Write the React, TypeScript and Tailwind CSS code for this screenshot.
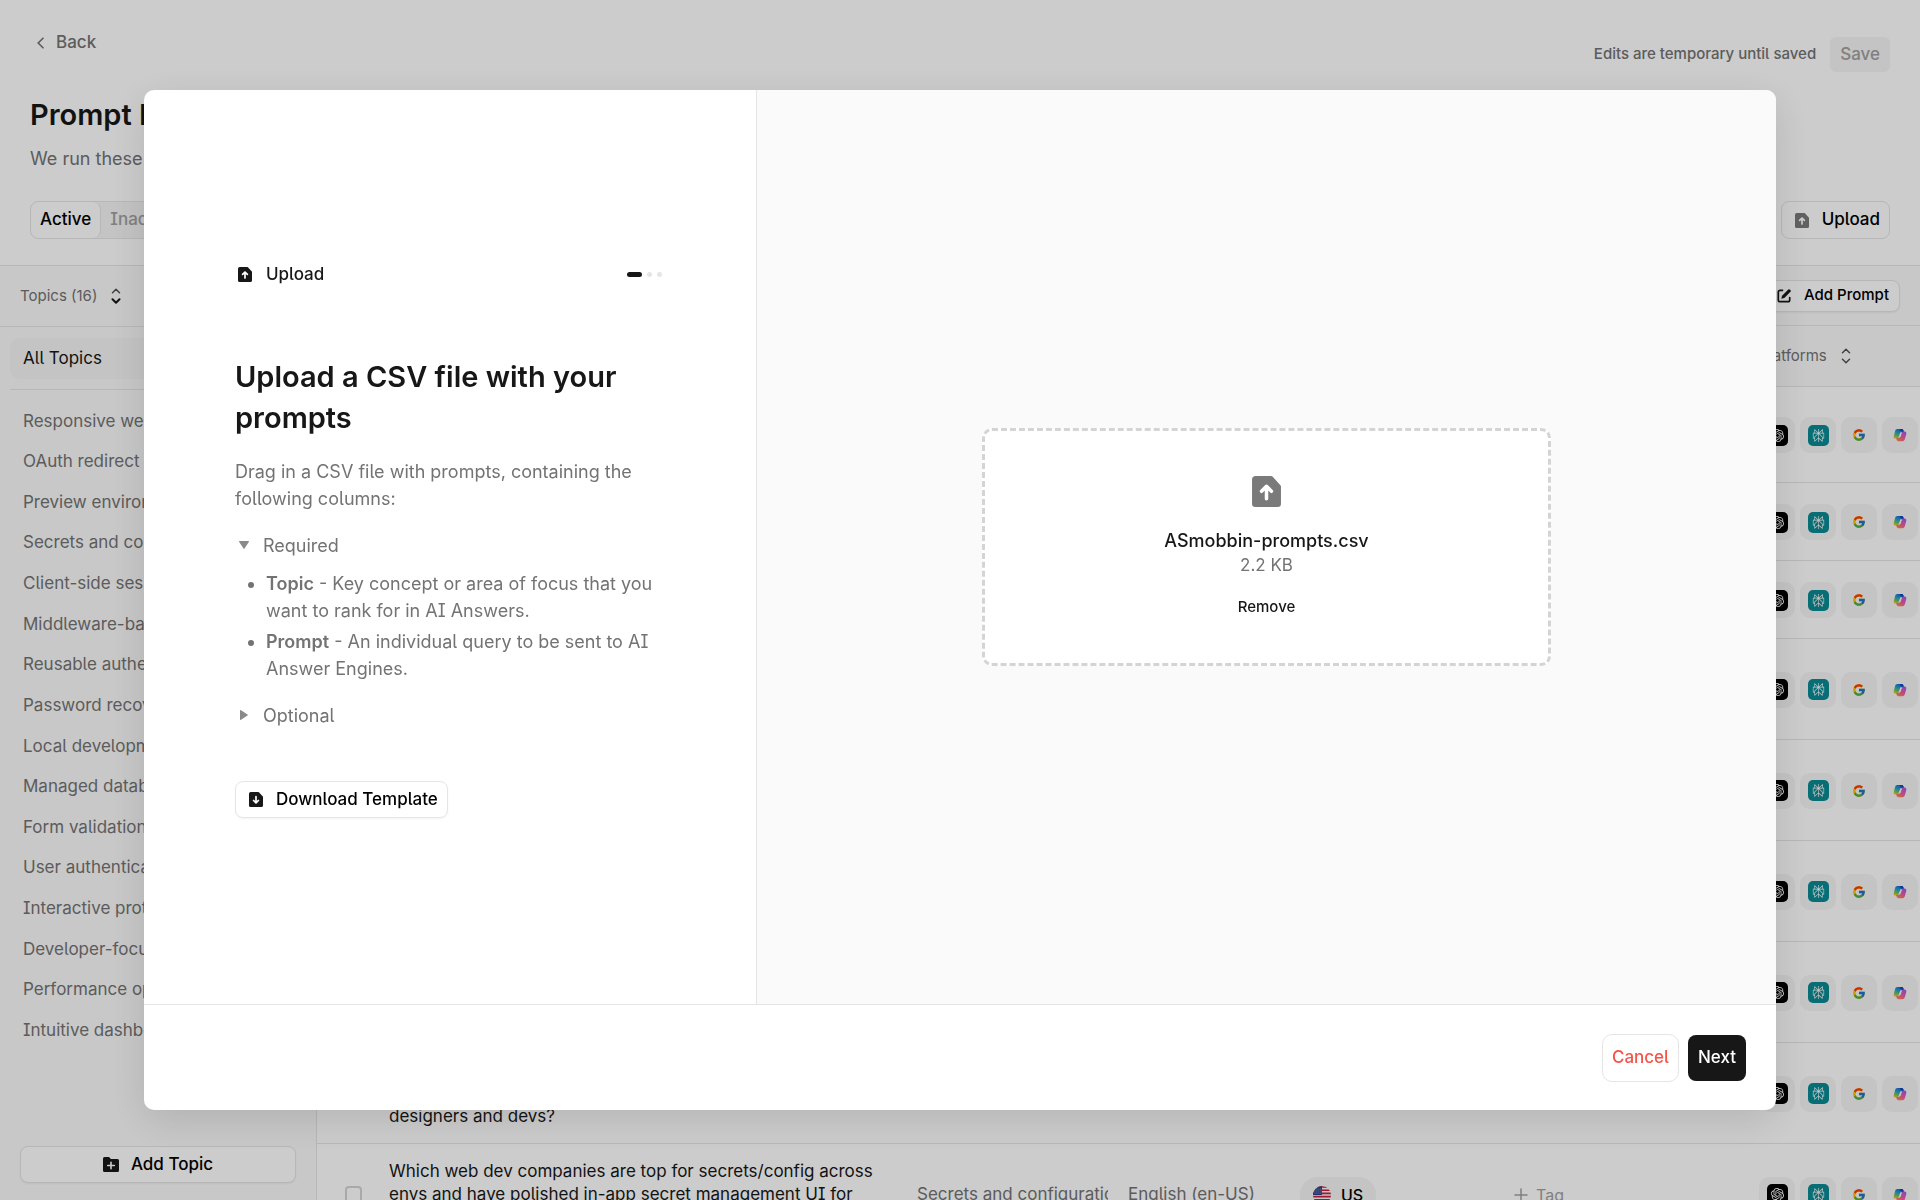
import type { ReactNode } from 'react';
import { FcGoogle } from 'react-icons/fc';
import { SiOpenai, SiPerplexity } from 'react-icons/si';

const topics = [
  'Responsive web design',
  'OAuth redirect URIs',
  'Preview environments',
  'Secrets and configuration',
  'Client-side sessions',
  'Middleware-based auth',
  'Reusable authentication',
  'Password recovery',
  'Local development',
  'Managed databases',
  'Form validation',
  'User authentication',
  'Interactive prototypes',
  'Developer-focused docs',
  'Performance optimization',
  'Intuitive dashboards',
];

interface PromptRow {
  id: number;
  height: string;
  prompt?: string;
  topic?: string;
}

const rows: PromptRow[] = [
  { id: 1, height: 'h-[96px]' },
  { id: 2, height: 'h-[78px]' },
  { id: 3, height: 'h-[78px]' },
  { id: 4, height: 'h-[101px]' },
  { id: 5, height: 'h-[101px]' },
  { id: 6, height: 'h-[101px]' },
  { id: 7, height: 'h-[101px]' },
  {
    id: 8,
    height: 'h-[101px]',
    prompt: 'Which web dev platforms are best for building\ninteractive prototypes shared between\ndesigners and devs?',
  },
  {
    id: 9,
    height: 'h-[101px]',
    prompt: 'Which web dev companies are top for secrets/config across\nenvs and have polished in-app secret management UI for\nteams?',
    topic: 'Secrets and configuration',
  },
];

function FileIcon({ className, down = false }: { className: string; down?: boolean }) {
  return (
    <svg viewBox="0 0 14 15" className={className} aria-hidden="true">
      <path
        fill="currentColor"
        d="M1.800 0h7.400a1 1 0 0 1 .7.300l3.700 4a1 1 0 0 1 .4.800v8.300a1.600 1.600 0 0 1-1.600 1.600H1.600A1.600 1.600 0 0 1 0 13.400V1.800A1.800 1.800 0 0 1 1.800 0z"
      />
      <path
        d={down ? 'M7 4.700v6M4.600 8.500 7 10.900l2.400-2.400' : 'M7 11v-6M4.600 7.400 7 5l2.400 2.400'}
        fill="none"
        stroke="white"
        strokeWidth="1.700"
        strokeLinecap="round"
        strokeLinejoin="round"
      />
    </svg>
  );
}

function FolderPlusIcon() {
  return (
    <svg viewBox="0 0 16 15" className="h-[15px] w-4 text-neutral-900" aria-hidden="true">
      <path
        fill="currentColor"
        d="M1.500 0h4.300a1 1 0 0 1 .8.400L7.800 2h6.700A1.500 1.500 0 0 1 16 3.500v10a1.500 1.500 0 0 1-1.500 1.500h-13A1.500 1.500 0 0 1 0 13.500v-12A1.500 1.500 0 0 1 1.500 0z"
      />
      <path d="M8 5.200v6.600M4.700 8.500h6.600" stroke="white" strokeWidth="1.600" strokeLinecap="round" />
    </svg>
  );
}

function ComposeIcon() {
  return (
    <svg viewBox="0 0 14 14" className="size-[14px] text-neutral-900" aria-hidden="true">
      <path
        d="M5.500 1.300H3A1.700 1.700 0 0 0 1.300 3v8A1.700 1.700 0 0 0 3 12.700h8a1.700 1.700 0 0 0 1.700-1.700V8.500"
        fill="none"
        stroke="currentColor"
        strokeWidth="1.700"
        strokeLinecap="round"
      />
      <path d="M11.300.500a1 1 0 0 1 1.400 0l.800.800a1 1 0 0 1 0 1.400L7.300 8.900l-3 .800.800-3z" fill="currentColor" />
    </svg>
  );
}

function SortIcon({ dark = false }: { dark?: boolean }) {
  return (
    <svg
      viewBox="0 0 10 16"
      className="h-4 w-[10px] text-neutral-600"
      fill="none"
      strokeWidth="1.500"
      strokeLinecap="round"
      strokeLinejoin="round"
      aria-hidden="true"
    >
      <path d="M1.500 4.700 5 1.300l3.500 3.400" stroke="currentColor" />
      <path d="M1.500 11.300 5 14.700l3.500-3.400" stroke={dark ? '#171717' : 'currentColor'} strokeWidth={dark ? 2 : 1.5} />
    </svg>
  );
}

function CopilotIcon() {
  return (
    <svg viewBox="0 0 24 24" className="size-[14px]" aria-hidden="true">
      <defs>
        <linearGradient id="copilot-left" gradientUnits="userSpaceOnUse" x1="12" y1="1" x2="5" y2="18">
          <stop offset="0" stopColor="#1a5fd8" />
          <stop offset=".45" stopColor="#1ea7c9" />
          <stop offset=".75" stopColor="#7cc04f" />
          <stop offset="1" stopColor="#f2c32e" />
        </linearGradient>
        <linearGradient id="copilot-right" gradientUnits="userSpaceOnUse" x1="19" y1="6" x2="10" y2="23">
          <stop offset="0" stopColor="#a45cf0" />
          <stop offset=".5" stopColor="#ec5aa6" />
          <stop offset="1" stopColor="#ff8550" />
        </linearGradient>
      </defs>
      <path d="M7.800 1.500h7c1.800 0 2.600 1 3.100 2.600l.8 2.700h-3.800c-1.500 0-2.500.9-2.900 2.200l-2.300 6.500c-.5 1.700-1.500 2.500-3.300 2.500H4C1.700 18 .7 16 1.300 13.500l2.200-8c.7-2.500 1.800-4 4.300-4z" fill="url(#copilot-left)" />
      <path d="M16.200 22.500h-7c-1.800 0-2.600-1-3.100-2.600l-.8-2.700h3.800c1.500 0 2.500-.9 2.900-2.200l2.300-6.500c.5-1.700 1.500-2.500 3.300-2.500H20c2.300 0 3.300 2 2.700 4.500l-2.200 8c-.7 2.500-1.800 4-4.300 4z" fill="url(#copilot-right)" />
      <path d="M11.500 1.500h3.300c1.800 0 2.600 1 3.100 2.600l.6 2h-3.300c-1.300 0-2-.6-2.400-1.800z" fill="#1546b8" />
      <path d="M12.900 8.500h2.300l-2.300 7h-2.300z" fill="#f5f5f5" />
    </svg>
  );
}

function UsFlag() {
  return (
    <svg viewBox="0 0 18 18" className="size-[18px]" aria-hidden="true">
      <defs>
        <clipPath id="us-flag">
          <circle cx="9" cy="9" r="9" />
        </clipPath>
      </defs>
      <g clipPath="url(#us-flag)">
        <rect width="18" height="18" fill="#f5f5f5" />
        <path d="M0 1h18M0 4.200h18M0 7.400h18M0 10.600h18M0 13.800h18M0 17h18" stroke="#c8203f" strokeWidth="1.600" />
        <rect width="9" height="9" fill="#2b3f87" />
        <path d="M1.500 3h7M1.500 5h7M1.500 7h7" stroke="#f5f5f5" strokeWidth=".7" strokeDasharray=".8 1.200" />
      </g>
    </svg>
  );
}

function Tile({ children }: { children: ReactNode }) {
  return (
    <span className="flex size-9 shrink-0 items-center justify-center rounded-[10px] bg-neutral-100">
      {children}
    </span>
  );
}

function Platforms() {
  return (
    <div className="flex gap-[5px]">
      <Tile>
        <span className="flex size-[21px] items-center justify-center rounded-[5px] bg-black text-white">
          <SiOpenai size={13} />
        </span>
      </Tile>
      <Tile>
        <span className="flex size-[21px] items-center justify-center rounded-[5px] bg-[#098a93] text-white">
          <SiPerplexity size={13} />
        </span>
      </Tile>
      <Tile>
        <FcGoogle size={14} />
      </Tile>
      <Tile>
        <CopilotIcon />
      </Tile>
    </div>
  );
}

function Sidebar() {
  return (
    <aside className="flex w-[317px] shrink-0 flex-col border-r border-neutral-200 bg-neutral-50">
      <div className="flex h-[61px] shrink-0 items-center gap-[14px] border-b border-neutral-200 pl-5 text-[15px] text-neutral-500">
        Topics (16)
        <SortIcon dark />
      </div>
      <nav className="flex flex-col pt-[11px] text-[17px] text-neutral-500">
        <a href="#all" className="mx-[10px] flex h-[41px] items-center rounded-[10px] bg-neutral-100 pl-[13px] text-neutral-900">
          All Topics
        </a>
        <hr className="mx-[10px] mt-[10px] border-neutral-200" />
        <ul className="mt-[11px] grid h-[650px] auto-rows-fr">
          {topics.map((topic) => (
            <li key={topic} className="flex items-center">
              <a href="#topic" className="truncate pl-[23px]">
                {topic}
              </a>
            </li>
          ))}
        </ul>
      </nav>
      <div className="mt-auto px-5 pb-[17px]">
        <button
          type="button"
          className="flex h-[37px] w-full items-center justify-center gap-3 rounded-lg border border-neutral-200 bg-white text-[17px] font-medium shadow-xs"
        >
          <FolderPlusIcon />
          Add Topic
        </button>
      </div>
    </aside>
  );
}

function PromptTable() {
  return (
    <table className="w-full table-fixed border-collapse bg-white text-[17px] leading-[23px]">
      <thead>
        <tr className="h-[60px] border-b border-neutral-200 bg-neutral-50 text-left text-[15px] text-neutral-500">
          <th className="w-[72px]" />
          <th className="w-[528px]" />
          <th className="w-[211px]" />
          <th className="w-[172px]" />
          <th className="w-[214px]" />
          <th />
          <th className="w-[161px] font-normal">
            <span className="flex items-center gap-[14px]">
              Platforms
              <SortIcon />
            </span>
          </th>
        </tr>
      </thead>
      <tbody>
        {rows.map((row) => (
          <tr key={row.id} className={`border-b border-neutral-200 *:pt-0.5 ${row.height}`}>
            <td className="pl-7">
              <input
                type="checkbox"
                aria-label="Select prompt"
                className="block size-[17px] appearance-none rounded-sm border-2 border-neutral-300 bg-white"
              />
            </td>
            <td className="whitespace-pre text-neutral-900">{row.prompt}</td>
            <td className="text-neutral-500">
              {row.topic && <div className="mr-5 overflow-hidden whitespace-nowrap">{row.topic}</div>}
            </td>
            <td className="whitespace-nowrap text-neutral-500">{row.topic && 'English (en-US)'}</td>
            <td>
              {row.topic && (
                <span className="inline-flex h-9 items-center gap-[10px] rounded-full bg-neutral-100 px-[13px] align-middle text-base font-medium">
                  <UsFlag />
                  US
                </span>
              )}
            </td>
            <td>
              {row.topic && (
                <button type="button" className="flex items-center gap-2 text-base text-neutral-400">
                  <svg viewBox="0 0 14 14" className="size-[14px]" aria-hidden="true">
                    <path d="M7 1v12M1 7h12" stroke="currentColor" strokeWidth="1.500" strokeLinecap="round" />
                  </svg>
                  Tag
                </button>
              )}
            </td>
            <td>
              <Platforms />
            </td>
          </tr>
        ))}
      </tbody>
    </table>
  );
}

function UploadDialog() {
  return (
    <div
      role="dialog"
      aria-modal="true"
      aria-labelledby="upload-title"
      className="flex h-[85vh] w-[85vw] flex-col overflow-hidden rounded-[10px] bg-white shadow-[0_10px_40px_rgba(0,0,0,0.12)]"
    >
      <div className="flex min-h-0 flex-1">
        <section className="flex w-3/8 items-center justify-center">
          <div className="w-[430px] pb-4 text-lg leading-[27px] text-neutral-500">
            <div className="flex items-center justify-between pr-[3px]">
              <span className="flex items-center gap-[14px] pl-[3px] text-[17px] font-medium text-neutral-900">
                <FileIcon className="h-[15px] w-[14px]" />
                Upload
              </span>
              <span className="flex gap-[5px]">
                <span className="h-[5px] w-[15px] rounded-full bg-neutral-900" />
                <span className="size-[5px] rounded-full bg-neutral-200" />
                <span className="size-[5px] rounded-full bg-neutral-200" />
              </span>
            </div>
            <h2
              id="upload-title"
              className="mt-[68px] text-[29px] leading-[41px] font-semibold text-neutral-900 [font-feature-settings:normal]"
            >
              Upload a CSV file with your prompts
            </h2>
            <p className="mt-5">Drag in a CSV file with prompts, containing the following columns:</p>
            <details open className="mt-5">
              <summary className="flex items-center gap-[14px] pl-1">
                <svg viewBox="0 0 10 8" className="h-2 w-[10px]" aria-hidden="true">
                  <path d="M.7 0h8.600a.6.600 0 0 1 .5 1L5.500 7.500a.6.600 0 0 1-1 0L.2 1a.6.600 0 0 1 .5-1z" fill="#8a8a8a" />
                </svg>
                Required
              </summary>
              <ul className="mt-[11px] list-disc space-y-1 pl-[31px]">
                <li>
                  <strong className="font-semibold">Topic</strong> - Key concept or area of focus that you want to rank for in AI Answers.
                </li>
                <li>
                  <strong className="font-semibold">Prompt</strong> - An individual query to be sent to AI Answer Engines.
                </li>
              </ul>
            </details>
            <details className="mt-5">
              <summary className="flex items-center gap-[15px] pl-[5px]">
                <svg viewBox="0 0 8 10" className="h-[10px] w-2" aria-hidden="true">
                  <path d="M0 .7v8.600a.6.600 0 0 0 1 .5L7.500 5.500a.6.600 0 0 0 0-1L1 .2a.6.600 0 0 0-1 .5z" fill="#8a8a8a" />
                </svg>
                Optional
              </summary>
            </details>
            <button
              type="button"
              className="mt-[52px] flex h-[37px] items-center gap-[13px] rounded-lg border border-neutral-200 pr-[9px] pl-[13px] text-[17px] font-medium whitespace-nowrap text-black shadow-xs"
            >
              <FileIcon down className="h-[15px] w-[14px] text-neutral-900" />
              Download Template
            </button>
          </div>
        </section>
        <section className="flex flex-1 items-center justify-center border-l border-neutral-200 bg-neutral-50">
          <div className="flex h-[238px] w-[569px] flex-col items-center justify-center rounded-[10px] border-3 border-dashed border-neutral-300 bg-white pt-[3px]">
            <FileIcon className="h-[31px] w-[29px] text-[#7a7a7a]" />
            <p className="mt-[21px] text-lg leading-[25px] font-medium text-neutral-900">ASmobbin-prompts.csv</p>
            <p className="text-[17px] leading-[25px] text-neutral-500">2.2 KB</p>
            <button type="button" className="mt-4 h-7 text-[15px] font-medium text-neutral-900">
              Remove
            </button>
          </div>
        </section>
      </div>
      <footer className="flex h-[106px] shrink-0 items-center justify-end gap-[9px] border-t border-neutral-200 pr-[30px] text-[17px] font-medium">
        <button type="button" className="h-12 rounded-[10px] border border-neutral-200 px-[9px] text-[#f5544a]">
          Cancel
        </button>
        <button type="button" className="h-[46px] rounded-lg bg-neutral-900 px-[10px] text-white">
          Next
        </button>
      </footer>
    </div>
  );
}

export default function App() {
  return (
    <div className="flex h-screen flex-col overflow-hidden bg-white font-[Inter,sans-serif] [font-feature-settings:'cv05','cv08']">
      <header className="h-[266px] shrink-0 border-b border-neutral-200 px-[30px] pt-[29px]">
        <div className="flex justify-between">
          <a href="#back" className="flex h-7 items-center gap-3 pl-[7px] text-[17px] font-medium text-neutral-500">
            <svg viewBox="0 0 7 12" className="h-3 w-[7px]" aria-hidden="true">
              <path d="M6 1.200 1.200 6 6 10.800" fill="none" stroke="currentColor" strokeWidth="1.600" strokeLinecap="round" />
            </svg>
            Back
          </a>
          <div className="mt-2 flex h-[35px] items-center gap-[14px] text-[15px] font-medium text-neutral-500">
            Edits are temporary until saved
            <button type="button" disabled className="h-full rounded-md bg-neutral-100 px-[10px] text-[17px] text-neutral-400">
              Save
            </button>
          </div>
        </div>
        <h1 className="mt-[22px] text-[29px] leading-[41px] font-semibold text-neutral-900 [font-feature-settings:normal]">
          Prompt Management
        </h1>
        <p className="mt-[10px] text-lg leading-[27px] text-neutral-500">We run these prompts daily</p>
        <div className="mt-[29px] flex items-center justify-between text-[17px] font-medium">
          <div className="flex h-[38px] rounded-lg border border-neutral-200 bg-neutral-100">
            <button type="button" className="rounded-lg border-r border-neutral-200 bg-white px-[9px]">
              Active
            </button>
            <button type="button" className="px-[9px] text-neutral-400">
              Inactive
            </button>
          </div>
          <button type="button" className="flex h-[38px] items-center gap-[13px] rounded-lg border border-neutral-200 pr-[9px] pl-[13px]">
            <FileIcon className="h-[15px] w-[14px] text-[#7a7a7a]" />
            Upload
          </button>
        </div>
      </header>
      <div className="flex min-h-0 flex-1">
        <Sidebar />
        <main className="min-w-0 flex-1 overflow-hidden">
          <div className="flex h-[60px] items-center justify-end border-b border-neutral-200 bg-neutral-50 pr-5">
            <button
              type="button"
              className="flex h-8 items-center gap-[13px] rounded-lg border border-neutral-200 bg-white px-[10px] text-[15px] font-medium shadow-xs"
            >
              <ComposeIcon />
              Add Prompt
            </button>
          </div>
          <PromptTable />
        </main>
      </div>
      <div className="fixed inset-0 flex items-center justify-center bg-black/20">
        <UploadDialog />
      </div>
    </div>
  );
}
